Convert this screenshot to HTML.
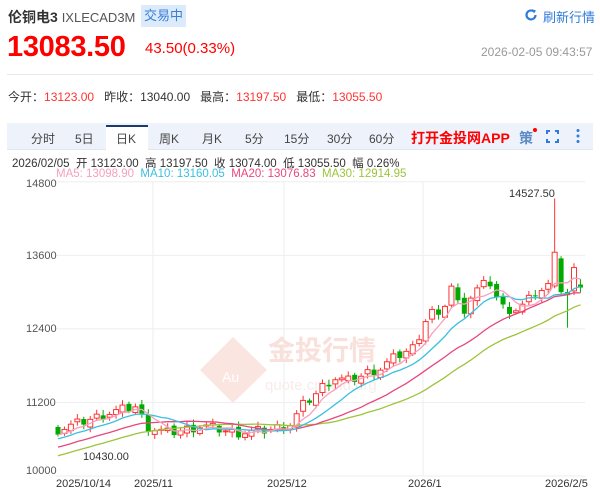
<!DOCTYPE html>
<html><head><meta charset="utf-8"><style>
*{margin:0;padding:0;box-sizing:border-box}
body{width:600px;height:489px;overflow:hidden;background:#fff;font-family:"Liberation Sans","Noto Sans CJK SC",sans-serif;position:relative;color:#333}
.a{position:absolute;white-space:nowrap}
</style></head><body>
<div class="a" style="left:8px;top:7px;font-size:14px;font-weight:bold;color:#333">伦铜电3 <span style="font-weight:normal;color:#555;font-size:13px">IXLECAD3M</span></div>
<div class="a" style="left:141px;top:5px;width:45px;height:22px;background:#dcebfb;color:#3a7fd5;font-size:13px;line-height:22px;text-align:center">交易中</div>
<svg class="a" style="left:524px;top:8px" width="14" height="14" viewBox="0 0 14 14"><path d="M11.5 7A4.5 4.5 0 1 1 9.5 3.2" fill="none" stroke="#2f7bd9" stroke-width="2.2"/><path d="M8 1.2L12 2.5 10 5.5Z" fill="#2f7bd9"/></svg>
<div class="a" style="left:543px;top:7px;font-size:13px;color:#2f7bd9">刷新行情</div>
<div class="a" style="left:7px;top:31px;font-size:29px;font-weight:bold;color:#f00;letter-spacing:-0.3px">13083.50</div>
<div class="a" style="left:145px;top:40px;font-size:15px;color:#f00">43.50(0.33%)</div>
<div class="a" style="left:481px;top:45px;font-size:12px;color:#999">2026-02-05 09:43:57</div>
<div class="a" style="left:7px;top:74px;width:586px;height:1px;background:#e8e8e8"></div>
<div class="a" style="left:8px;top:88px;font-size:12px;color:#333">今开：<span style="color:#f33">13123.00</span>&nbsp;&nbsp;&nbsp;昨收：13040.00&nbsp;&nbsp;&nbsp;最高：<span style="color:#f33">13197.50</span>&nbsp;&nbsp;&nbsp;最低：<span style="color:#f33">13055.50</span></div>
<div class="a" style="left:7px;top:123px;width:586px;height:27px;background:#eef3fb;border-bottom:1px solid #e0e6ef"></div>
<div class="a" style="left:106px;top:125px;width:42px;height:25px;background:#fff;border-top:2px solid #1d3a6e"></div>
<div class="a" style="left:0;top:130px;font-size:12px;color:#444">
<span class="a" style="left:31px">分时</span><span class="a" style="left:75px">5日</span><span class="a" style="left:116px">日K</span><span class="a" style="left:159px">周K</span><span class="a" style="left:202px">月K</span><span class="a" style="left:245px">5分</span><span class="a" style="left:284px">15分</span><span class="a" style="left:327px">30分</span><span class="a" style="left:369px">60分</span></div>
<div class="a" style="left:411px;top:128px;font-size:14px;font-weight:bold;color:#f00">打开金投网APP</div>
<div class="a" style="left:519px;top:128px;font-size:14px;font-weight:bold;color:#5b8ac4">策</div>
<div class="a" style="left:533px;top:128px;width:4px;height:4px;border-radius:50%;background:#f00"></div>
<svg class="a" style="left:546px;top:130px" width="13" height="13" viewBox="0 0 13 13" fill="none" stroke="#2f7bd9" stroke-width="2"><path d="M1 4V1H4M9 1H12V4M12 9V12H9M4 12H1V9"/></svg>
<svg class="a" style="left:576px;top:128px" width="4" height="16"><circle cx="2" cy="2.5" r="1.5" fill="#2f7bd9"/><circle cx="2" cy="8" r="1.5" fill="#2f7bd9"/><circle cx="2" cy="13.5" r="1.5" fill="#2f7bd9"/></svg>
<div class="a" style="left:12px;top:155px;font-size:11.5px;color:#333">2026/02/05&nbsp; 开 13123.00&nbsp; 高 13197.50&nbsp; 收 13074.00&nbsp; 低 13055.50&nbsp; 幅 0.26%</div>
<div class="a" style="left:56px;top:168px;font-size:11.5px"><span style="color:#f7a0bb">MA5: 13098.90</span>&nbsp;&nbsp;<span style="color:#3bbfdf">MA10: 13160.05</span>&nbsp;&nbsp;<span style="color:#e8477c">MA20: 13076.83</span>&nbsp;&nbsp;<span style="color:#9cc43a">MA30: 12914.95</span></div>
<svg id="c" class="a" style="left:0;top:0" width="600" height="489"></svg>
<script>
var s=document.getElementById('c'),h='';
function Y(p){return 476-(p-10000)*0.0613}
[14800,13600,12400,11200].forEach(function(p){h+='<line x1="56" x2="585" y1="'+Y(p)+'" y2="'+Y(p)+'" stroke="#eee"/>'});
[153,284,423].forEach(function(x){h+='<line x1="'+x+'" x2="'+x+'" y1="181" y2="476" stroke="#eee"/>'});
h+='<line x1="56" x2="585" y1="476" y2="476" stroke="#eee"/>';
h+='<path d="M200 370L233 337 267 370 233 403Z" fill="#fbe5e0"/><text x="222" y="382" font-size="14" fill="#fff" font-family="Liberation Sans">Au</text>';
h+='<text x="268" y="360" font-size="27" font-weight="bold" fill="#f9e0da" font-family="Noto Sans CJK SC">金投行情</text>';
h+='<text x="265" y="390" font-size="15" fill="#f6ecea" font-family="Liberation Sans">quote.cngold.org</text>';
var key=[[0,10750],[10,11050],[14,11130],[16,10800],[20,10700],[26,10820],[32,10700],[38,10750],[42,10850],[44,11150],[46,11300],[48,11500],[50,11600],[52,11550],[54,11600],[56,11700],[58,11750],[60,11900],[62,12000],[64,12100],[66,12500],[67,12800],[68,12450],[70,12900],[71,13150],[72,12800],[73,12700],[74,12900],[76,13100],[78,13150],[79,12900],[80,12750],[82,12700],[84,12800],[86,13000],[88,13050],[89,13250],[90,12950],[91,12800],[92,13300],[93,13000],[94,13080]];
var N=82,cl=[];
for(var i=0;i<N;i++){var u=i*94/81;for(var k=0;k<key.length-1;k++){if(u>=key[k][0]&&u<=key[k+1][0]){var t=(u-key[k][0])/(key[k+1][0]-key[k][0]||1);cl[i]=key[k][1]+t*(key[k+1][1]-key[k][1]);break;}}}
for(i=0;i<N;i++)cl[i]+=((i*37)%7-3)*25;
var spike=77;
cl[spike]=13650;cl[spike+1]=13000;cl[spike+2]=12950;cl[spike+3]=13400;cl[N-1]=13074;
var pre=[];for(i=0;i<30;i++)pre.push(9900+i*28);
var all=pre.concat(cl),sp=6.45;
function ma(n,col){var d='';for(var i=0;i<N;i++){var j=i+30,sum=0;for(var q=0;q<n;q++)sum+=all[j-q];var x=58+i*sp;d+=(i?'L':'M')+x.toFixed(1)+' '+Y(sum/n).toFixed(1);}h+='<path d="'+d+'" fill="none" stroke="'+col+'" stroke-width="1.3"/>';}
var w=5;
for(i=0;i<N;i++){var o=i?cl[i-1]+((i*13)%5-2)*20:10800,c=cl[i];
if(i==spike)o=13100;if(i==spike+1)o=13550;if(i==spike+3)o=13020;if(i==N-1)o=13123;
var up=c>=o,col=up?'#f33':'#0a0';if(i==0){col='#0a0';up=false;}
var hi=Math.max(o,c)+30+(i*17)%60,lo=Math.min(o,c)-30-(i*11)%60;if(i==spike){hi=14527.5}if(i==spike+2)lo=12420;
var x=58+i*sp;h+='<line x1="'+x+'" x2="'+x+'" y1="'+Y(hi)+'" y2="'+Y(lo)+'" stroke="'+col+'"/>';
var y1=Y(Math.max(o,c)),hh=Math.max(1,Y(Math.min(o,c))-y1);
h+='<rect x="'+(x-w/2)+'" y="'+y1+'" width="'+w+'" height="'+hh+'" '+(up?'fill="#fff" stroke="#f33" stroke-width="1"':'fill="#0a0"')+'/>';}
ma(30,'#9cc43a');ma(20,'#e8477c');ma(10,'#3bbfdf');ma(5,'#f7a0bb');
var tx=[[14800,187],[13600,259],[12400,332],[11200,406],[10000,474]];
tx.forEach(function(t){h+='<text x="26" y="'+t[1]+'" font-size="11" fill="#555" font-family="Liberation Sans">'+t[0]+'</text>'});
h+='<text x="509" y="197" font-size="11" fill="#333" font-family="Liberation Sans">14527.50</text>';
h+='<text x="83" y="460" font-size="11" fill="#333" font-family="Liberation Sans">10430.00</text>';
[['2025/10/14',56],['2025/11',134],['2025/12',267],['2026/1',408],['2026/2/5',545]].forEach(function(t){h+='<text x="'+t[1]+'" y="487" font-size="11" fill="#333" font-family="Liberation Sans">'+t[0]+'</text>'});
s.innerHTML=h;
</script>
</body></html>
